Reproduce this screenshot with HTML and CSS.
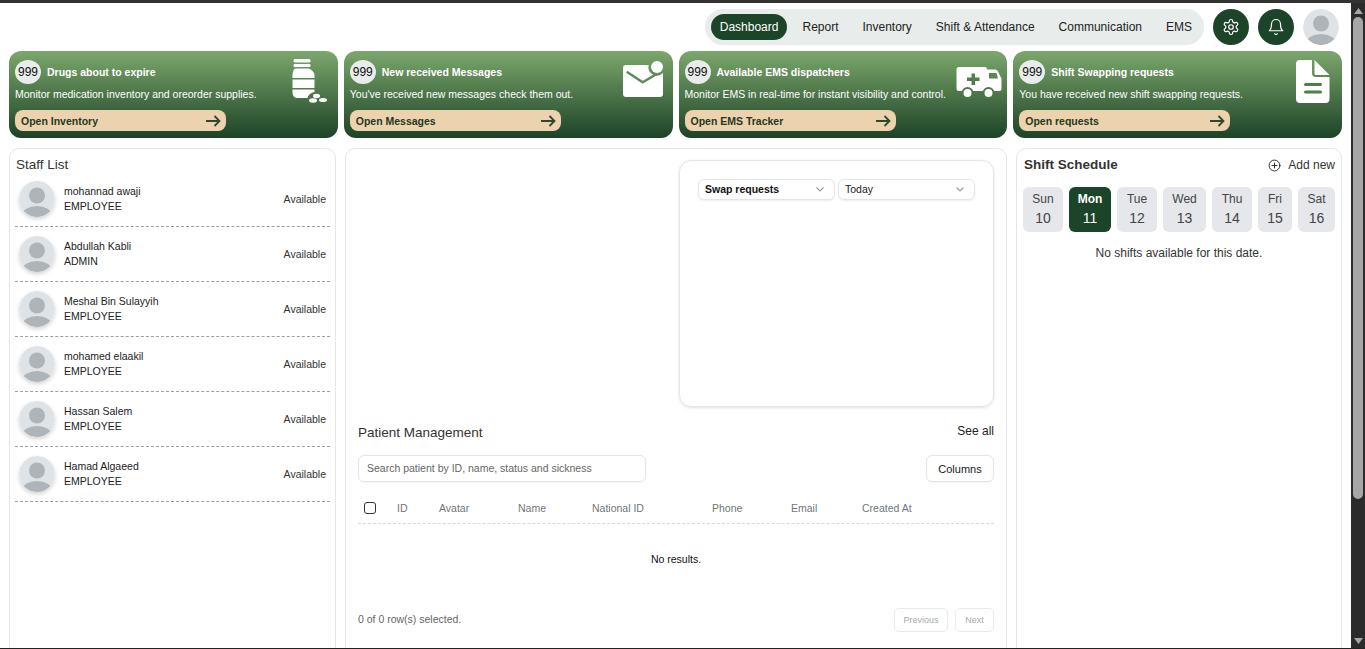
FILE: index.html
```html
<!DOCTYPE html>
<html lang="en">
<head>
    <meta charset="UTF-8">
    <meta name="viewport" content="width=device-width, initial-scale=1.0">
    <title>Dashboard</title>
    <link rel="stylesheet" href="styles.css">
</head>
<body>
    <div class="window">
        <div class="page">
            <!-- Top navigation -->
            <header class="topbar">
                <nav class="nav-pill">
                    <a class="nav-item active">Dashboard</a>
                    <a class="nav-item">Report</a>
                    <a class="nav-item">Inventory</a>
                    <a class="nav-item">Shift &amp; Attendance</a>
                    <a class="nav-item">Communication</a>
                    <a class="nav-item">EMS</a>
                </nav>
                <button class="round-btn">
                    <svg width="18" height="18" viewBox="0 0 24 24" fill="none" stroke="#fff" stroke-width="1.6" stroke-linecap="round" stroke-linejoin="round"><path d="M12.22 2h-.44a2 2 0 0 0-2 2v.18a2 2 0 0 1-1 1.73l-.43.25a2 2 0 0 1-2 0l-.15-.08a2 2 0 0 0-2.73.73l-.22.38a2 2 0 0 0 .73 2.73l.15.1a2 2 0 0 1 1 1.72v.51a2 2 0 0 1-1 1.74l-.15.09a2 2 0 0 0-.73 2.73l.22.38a2 2 0 0 0 2.73.73l.15-.08a2 2 0 0 1 2 0l.43.25a2 2 0 0 1 1 1.73V20a2 2 0 0 0 2 2h.44a2 2 0 0 0 2-2v-.18a2 2 0 0 1 1-1.73l.43-.25a2 2 0 0 1 2 0l.15.08a2 2 0 0 0 2.73-.73l.22-.39a2 2 0 0 0-.73-2.73l-.15-.08a2 2 0 0 1-1-1.74v-.5a2 2 0 0 1 1-1.74l.15-.09a2 2 0 0 0 .73-2.73l-.22-.38a2 2 0 0 0-2.73-.73l-.15.08a2 2 0 0 1-2 0l-.43-.25a2 2 0 0 1-1-1.73V4a2 2 0 0 0-2-2z"/><circle cx="12" cy="12" r="3"/></svg>
                </button>
                <button class="round-btn">
                    <svg width="18" height="18" viewBox="0 0 24 24" fill="none" stroke="#fff" stroke-width="1.6" stroke-linecap="round" stroke-linejoin="round"><path d="M6 8a6 6 0 0 1 12 0c0 7 3 9 3 9H3s3-2 3-9"/><path d="M10.3 21a1.94 1.94 0 0 0 3.4 0"/></svg>
                </button>
                <svg class="avatar avatar-top" viewBox="0 0 36 36"><use href="#user-pic"/></svg>
            </header>

            <!-- Summary cards -->
            <section class="cards">
                <div class="card">
                    <div class="card-head"><span class="count">999</span><span class="card-title">Drugs about to expire</span></div>
                    <p class="card-desc">Monitor medication inventory and oreorder supplies.</p>
                    <a class="card-link"><span>Open Inventory</span><svg width="16" height="12" viewBox="0 0 16 12"><use href="#arrow"/></svg></a>
                    <svg class="card-icon icon-bottle" width="36" height="45" viewBox="0 0 36 45" fill="#fff">
                        <rect x="1.5" y="0" width="17" height="3.5" rx="1.5"/>
                        <rect x="1.5" y="5" width="17" height="3" rx="1"/>
                        <path d="M3 9.5h14c3 1.5 5 3.500 5.500 6v3.500H0.500v-3.500C1 13 1 11 3 9.500z"/>
                        <path d="M0.500 20.500h22v8.500H0.500z"/>
                        <path d="M0.500 30.500h22V33c-2.500 0.500-6 2-7 6H4c-2.500-1-3.500-3-3.500-5.500z"/>
                        <ellipse cx="24.500" cy="37" rx="3.500" ry="2.200"/>
                        <ellipse cx="21" cy="41.500" rx="4" ry="2.200"/>
                        <ellipse cx="31" cy="41" rx="4" ry="2"/>
                    </svg>
                </div>
                <div class="card">
                    <div class="card-head"><span class="count">999</span><span class="card-title">New received Messages</span></div>
                    <p class="card-desc">You've received new messages check them out.</p>
                    <a class="card-link"><span>Open Messages</span><svg width="16" height="12" viewBox="0 0 16 12"><use href="#arrow"/></svg></a>
                    <svg class="card-icon icon-mail" width="40" height="38" viewBox="0 0 40 38">
                        <path d="M3 4H25.700A8.500 8.500 0 0 0 40 12V33a3 3 0 0 1-3 3H3a3 3 0 0 1-3-3V7a3 3 0 0 1 3-3z" fill="#fff"/>
                        <path d="M3.700 10.700l16 10.600 14-8.300" fill="none" stroke="#5f8b57" stroke-width="2.500"/>
                        <circle cx="34" cy="6" r="6" fill="#fff"/>
                    </svg>
                </div>
                <div class="card">
                    <div class="card-head"><span class="count">999</span><span class="card-title">Available EMS dispatchers</span></div>
                    <p class="card-desc">Monitor EMS in real-time for instant visibility and control.</p>
                    <a class="card-link"><span>Open EMS Tracker</span><svg width="16" height="12" viewBox="0 0 16 12"><use href="#arrow"/></svg></a>
                    <svg class="card-icon icon-ems" width="46" height="33" viewBox="0 0 46 33">
                        <path d="M3 0h26a2 2 0 0 1 2 2v.500h7c2 0 3 .5 4 2l3.500 7V22a2 2 0 0 1-2 2H3a2.500 2.500 0 0 1-2.500-2.500V2.500A2.500 2.500 0 0 1 3 0z" fill="#fff"/>
                        <path d="M33 6h7.500l1.500 5.500H33z" fill="#5a8752"/>
                        <path d="M15.500 6.500h3.500v4h4.500v3.500H19v4h-3.500v-4H11v-3.500h4.500z" fill="#4f7d4b"/>
                        <circle cx="11.500" cy="26" r="5" fill="#fff" stroke="#4a7648" stroke-width="2"/>
                        <circle cx="32.500" cy="26" r="5" fill="#fff" stroke="#4a7648" stroke-width="2"/>
                    </svg>
                </div>
                <div class="card">
                    <div class="card-head"><span class="count">999</span><span class="card-title">Shift Swapping requests</span></div>
                    <p class="card-desc">You have received new shift swapping requests.</p>
                    <a class="card-link"><span>Open requests</span><svg width="16" height="12" viewBox="0 0 16 12"><use href="#arrow"/></svg></a>
                    <svg class="card-icon icon-file" width="34" height="43" viewBox="0 0 34 43">
                        <path d="M4 0h12v13a4 4 0 0 0 4 4h13.500v22a4 4 0 0 1-4 4H4a4 4 0 0 1-4-4V4a4 4 0 0 1 4-4z" fill="#fff"/>
                        <path d="M18.500 0l15 15H20a1.500 1.500 0 0 1-1.500-1.500z" fill="#fff"/>
                        <rect x="8" y="23" width="18" height="3" rx="1.500" fill="#4f7d4b"/>
                        <rect x="8" y="30.500" width="18" height="3" rx="1.500" fill="#4f7d4b"/>
                    </svg>
                </div>
            </section>

            <section class="panels">
                <!-- Staff -->
                <aside class="panel staff">
                    <h2 class="staff-title">Staff List</h2>
                    <div class="staff-row">
                        <svg class="avatar" viewBox="0 0 36 36"><use href="#user-pic"/></svg>
                        <div class="staff-info"><div>mohannad awaji</div><div>EMPLOYEE</div></div>
                        <span class="staff-status">Available</span>
                    </div>
                    <div class="staff-row">
                        <svg class="avatar" viewBox="0 0 36 36"><use href="#user-pic"/></svg>
                        <div class="staff-info"><div>Abdullah Kabli</div><div>ADMIN</div></div>
                        <span class="staff-status">Available</span>
                    </div>
                    <div class="staff-row">
                        <svg class="avatar" viewBox="0 0 36 36"><use href="#user-pic"/></svg>
                        <div class="staff-info"><div>Meshal Bin Sulayyih</div><div>EMPLOYEE</div></div>
                        <span class="staff-status">Available</span>
                    </div>
                    <div class="staff-row">
                        <svg class="avatar" viewBox="0 0 36 36"><use href="#user-pic"/></svg>
                        <div class="staff-info"><div>mohamed elaakil</div><div>EMPLOYEE</div></div>
                        <span class="staff-status">Available</span>
                    </div>
                    <div class="staff-row">
                        <svg class="avatar" viewBox="0 0 36 36"><use href="#user-pic"/></svg>
                        <div class="staff-info"><div>Hassan Salem</div><div>EMPLOYEE</div></div>
                        <span class="staff-status">Available</span>
                    </div>
                    <div class="staff-row">
                        <svg class="avatar" viewBox="0 0 36 36"><use href="#user-pic"/></svg>
                        <div class="staff-info"><div>Hamad Algaeed</div><div>EMPLOYEE</div></div>
                        <span class="staff-status">Available</span>
                    </div>
                </aside>

                <!-- Chart and patients -->
                <main class="panel center">
                    <div class="chart-box">
                        <div class="select strong"><span>Swap requests</span><svg width="10" height="10" viewBox="0 0 10 10"><use href="#chevron"/></svg></div>
                        <div class="select"><span>Today</span><svg width="10" height="10" viewBox="0 0 10 10"><use href="#chevron"/></svg></div>
                    </div>
                    <div class="patients">
                        <div class="patients-head">
                            <h2 class="patients-title">Patient Management</h2>
                            <a class="see-all">See all</a>
                        </div>
                        <div class="patients-tools">
                            <div class="search">Search patient by ID, name, status and sickness</div>
                            <button class="columns-btn">Columns</button>
                        </div>
                        <div class="table-head">
                            <span class="check"></span>
                            <span>ID</span>
                            <span>Avatar</span>
                            <span>Name</span>
                            <span>National ID</span>
                            <span>Phone</span>
                            <span>Email</span>
                            <span>Created At</span>
                        </div>
                        <div class="no-results">No results.</div>
                        <div class="table-foot">
                            <span class="selected">0 of 0 row(s) selected.</span>
                            <div class="pager">
                                <button class="page-btn btn-prev">Previous</button>
                                <button class="page-btn btn-next">Next</button>
                            </div>
                        </div>
                    </div>
                </main>

                <!-- Schedule -->
                <aside class="panel schedule">
                    <div class="schedule-head">
                        <h2 class="schedule-title">Shift Schedule</h2>
                        <a class="add-new">
                            <svg width="13" height="13" viewBox="0 0 24 24" fill="none" stroke="#222" stroke-width="1.700" stroke-linecap="round"><circle cx="12" cy="12" r="10"/><path d="M12 7.500v9M7.500 12h9"/></svg>
                            Add new
                        </a>
                    </div>
                    <div class="days">
                        <div class="day"><span>Sun</span><span>10</span></div>
                        <div class="day active"><span>Mon</span><span>11</span></div>
                        <div class="day"><span>Tue</span><span>12</span></div>
                        <div class="day"><span>Wed</span><span>13</span></div>
                        <div class="day"><span>Thu</span><span>14</span></div>
                        <div class="day"><span>Fri</span><span>15</span></div>
                        <div class="day"><span>Sat</span><span>16</span></div>
                    </div>
                    <p class="no-shifts">No shifts available for this date.</p>
                </aside>
            </section>
        </div>

        <!-- Browser scrollbar -->
        <div class="scrollbar">
            <svg width="9" height="6" viewBox="0 0 9 6"><path d="M4.500 0L9 6H0z" fill="#a6a6a6"/></svg>
            <div class="scroll-thumb"></div>
            <svg width="9" height="6" viewBox="0 0 9 6"><path d="M4.500 6L0 0h9z" fill="#a6a6a6"/></svg>
        </div>
    </div>

    <!-- Shared icons -->
    <svg class="defs" width="0" height="0">
        <defs>
            <symbol id="user-pic" viewBox="0 0 36 36">
                <circle cx="18" cy="18" r="18" fill="#e0e3e5"/>
                <clipPath id="user-clip"><circle cx="18" cy="18" r="18"/></clipPath>
                <g clip-path="url(#user-clip)" fill="#aeb4b7">
                    <circle cx="18" cy="14.500" r="8"/>
                    <ellipse cx="18" cy="34" rx="15" ry="9"/>
                </g>
            </symbol>
            <symbol id="arrow" viewBox="0 0 16 12">
                <path d="M1 6h13.500M9.500 1l5 5-5 5" fill="none" stroke="#2b4a2e" stroke-width="1.800"/>
            </symbol>
            <symbol id="chevron" viewBox="0 0 10 10">
                <path d="M1.500 3.500L5 7l3.500-3.500" fill="none" stroke="#9a9a9a" stroke-width="1.100"/>
            </symbol>
        </defs>
    </svg>
</body>
</html>
```

FILE: styles.css
```css
* {
    box-sizing: border-box;
}

html, body {
    margin: 0;
    height: 649px;
    overflow: hidden;
}

body {
    font-family: "Liberation Sans", Arial, sans-serif;
    font-size: 10.5px;
    color: #222;
    background: #fff;
}

h2, p {
    margin: 0;
    font-weight: normal;
}

.defs {
    position: absolute;
}

.window {
    height: 649px;
    display: flex;
    border-top: 3px solid #333;
    border-bottom: 1px solid #222;
}

.page {
    flex: 1;
    min-width: 0;
    padding: 6px 9px 0;
    overflow: hidden;
}

/* Scrollbar */
.scrollbar {
    width: 14px;
    flex-shrink: 0;
    padding: 5px 0 4px;
    background: #2b2b2b;
    display: flex;
    flex-direction: column;
    align-items: center;
    gap: 3px;
}

.scroll-thumb {
    width: 10px;
    height: 482px;
    margin-bottom: auto;
    border-radius: 5px;
    background: #a6a6a6;
}

/* Top navigation */
.topbar {
    height: 36px;
    padding-right: 3px;
    display: flex;
    justify-content: flex-end;
    gap: 9px;
}

.nav-pill {
    display: flex;
    align-items: center;
    gap: 6px;
    padding: 0 3px 0 6px;
    border-radius: 18px;
    background: #e8ecea;
    font-size: 12px;
}

.nav-item {
    height: 26px;
    padding: 0 9px;
    line-height: 26px;
    border-radius: 13px;
    color: #222;
}

.nav-item.active {
    background: #1c4428;
    color: #fff;
}

.round-btn {
    width: 36px;
    height: 36px;
    padding: 0;
    border: none;
    border-radius: 50%;
    background: #1c4428;
    display: flex;
    align-items: center;
    justify-content: center;
}

.avatar {
    width: 36px;
    height: 36px;
    flex-shrink: 0;
    border-radius: 50%;
}

/* Summary cards */
.cards {
    margin-top: 6px;
    display: grid;
    grid-template-columns: repeat(4, 1fr);
    gap: 6px;
}

.card {
    position: relative;
    height: 87px;
    padding: 9px 6px 0;
    border-radius: 12px;
    background: linear-gradient(#7ca76c, #1d4327);
    color: #fff;
}

.card-head {
    display: flex;
    align-items: center;
    gap: 6px;
}

.count {
    width: 26px;
    height: 24px;
    border-radius: 50%;
    background: #e8ecea;
    color: #111;
    font-size: 12px;
    line-height: 24px;
    text-align: center;
}

.card-title {
    font-size: 10.5px;
    font-weight: bold;
}

.card-desc {
    margin-top: 3px;
    font-size: 10.5px;
    line-height: 14px;
}

.card-link {
    width: 211px;
    height: 21px;
    margin-top: 9px;
    padding: 0 5px 0 6px;
    border-radius: 8px;
    background: #edd2ae;
    color: #1e3a22;
    font-size: 10.5px;
    font-weight: bold;
    display: flex;
    align-items: center;
    justify-content: space-between;
}

.card-icon {
    position: absolute;
}

.icon-bottle {
    top: 8px;
    right: 10px;
}

.icon-mail {
    top: 10px;
    right: 10px;
}

.icon-ems {
    top: 16px;
    right: 5px;
}

.icon-file {
    top: 9px;
    right: 12px;
}

/* Panels */
.panels {
    margin-top: 10px;
    display: grid;
    grid-template-columns: 327px 662px 326px;
    gap: 9px;
}

.panel {
    height: 520px;
    border: 1px solid #e3e5e8;
    border-radius: 10px;
    background: #fff;
}

.staff {
    padding: 8px 5px 0;
}

.staff-title {
    margin-bottom: -1px;
    padding-left: 1px;
    font-size: 13.5px;
    line-height: 16px;
    color: #333;
}

.staff-row {
    height: 55px;
    padding: 0 4px;
    border-bottom: 1px dashed #9a9fa3;
    display: flex;
    align-items: center;
    gap: 9px;
}

.staff-row .avatar {
    box-shadow: 0 2px 4px rgba(0, 0, 0, 0.18);
}

.staff-info {
    flex: 1;
    line-height: 15px;
    color: #222;
}

.staff-status {
    color: #333;
}

/* Chart box */
.center {
    padding: 11px 12px 0;
}

.chart-box {
    width: 315px;
    height: 247px;
    margin-left: 321px;
    padding: 18px 18px 0;
    border: 1px solid #e3e5e8;
    border-radius: 12px;
    box-shadow: 0 1px 3px rgba(0, 0, 0, 0.12);
    display: flex;
    align-items: flex-start;
    gap: 3px;
}

.select {
    width: 137px;
    height: 21px;
    padding: 0 9px 1px 6px;
    border: 1px solid #e3e5e8;
    border-radius: 6px;
    box-shadow: 0 1px 2px rgba(0, 0, 0, 0.08);
    color: #222;
    display: flex;
    align-items: center;
    justify-content: space-between;
}

.select.strong {
    font-weight: bold;
    color: #111;
}

/* Patients */
.patients-head {
    margin-top: 18px;
    display: flex;
    align-items: flex-start;
    justify-content: space-between;
}

.patients-title {
    font-size: 13.5px;
    line-height: 16px;
    color: #333;
}

.see-all {
    margin-top: -1px;
    font-size: 12px;
    line-height: 14px;
    color: #222;
}

.patients-tools {
    margin-top: 14px;
    display: flex;
    justify-content: space-between;
}

.search {
    width: 288px;
    height: 27px;
    padding-left: 8px;
    line-height: 25px;
    border: 1px solid #e3e5e8;
    border-radius: 6px;
    box-shadow: 0 1px 2px rgba(0, 0, 0, 0.05);
    color: #666;
}

.columns-btn {
    width: 68px;
    height: 27px;
    padding: 0;
    border: 1px solid #e3e5e8;
    border-radius: 6px;
    background: #fff;
    box-shadow: 0 1px 2px rgba(0, 0, 0, 0.05);
    font-family: inherit;
    font-size: 11px;
    color: #222;
}

.table-head {
    height: 42px;
    padding: 20px 0 0 6px;
    border-bottom: 1px dashed #d5d8da;
    display: grid;
    grid-template-columns: 33px 42px 79px 74px 120px 79px 71px 1fr;
    align-items: start;
    line-height: 13px;
    color: #71767a;
}

.check {
    width: 12px;
    height: 12px;
    border: 1px solid #333;
    border-radius: 3px;
}

.no-results {
    height: 76px;
    line-height: 71px;
    text-align: center;
    color: #111;
}

.table-foot {
    height: 25px;
    margin-top: 7px;
    display: flex;
    align-items: center;
    justify-content: space-between;
}

.selected {
    margin-bottom: 2px;
    color: #666;
}

.pager {
    padding-top: 1px;
    display: flex;
    gap: 7px;
}

.page-btn {
    height: 24px;
    padding: 0;
    border: 1px solid #e9ebec;
    border-radius: 5px;
    background: #fff;
    font-family: inherit;
    font-size: 9px;
    color: #a6a9ab;
}

.btn-prev {
    width: 54px;
}

.btn-next {
    width: 39px;
}

/* Schedule */
.schedule {
    padding: 8px 6px 0;
}

.schedule-head {
    padding-left: 1px;
    display: flex;
    align-items: center;
    justify-content: space-between;
}

.schedule-title {
    font-size: 13.5px;
    font-weight: bold;
    line-height: 16px;
    color: #333;
}

.add-new {
    font-size: 12px;
    color: #333;
    display: flex;
    align-items: center;
    gap: 7px;
}

.days {
    margin-top: 14px;
    display: grid;
    grid-template-columns: 40px 42px 40px 43px 40px 34px 37px;
    gap: 6px;
}

.day {
    height: 45px;
    padding-top: 5px;
    border-radius: 6px;
    background: #e5e7eb;
    color: #444;
    font-size: 12px;
    display: flex;
    flex-direction: column;
    align-items: center;
    gap: 4px;
}

.day span:last-child {
    font-size: 14px;
}

.day.active {
    background: #1c4428;
    color: #fff;
    font-weight: bold;
}

.day.active span:last-child {
    font-weight: normal;
}

.no-shifts {
    margin-top: 14px;
    text-align: center;
    font-size: 12px;
    color: #333;
}
```
